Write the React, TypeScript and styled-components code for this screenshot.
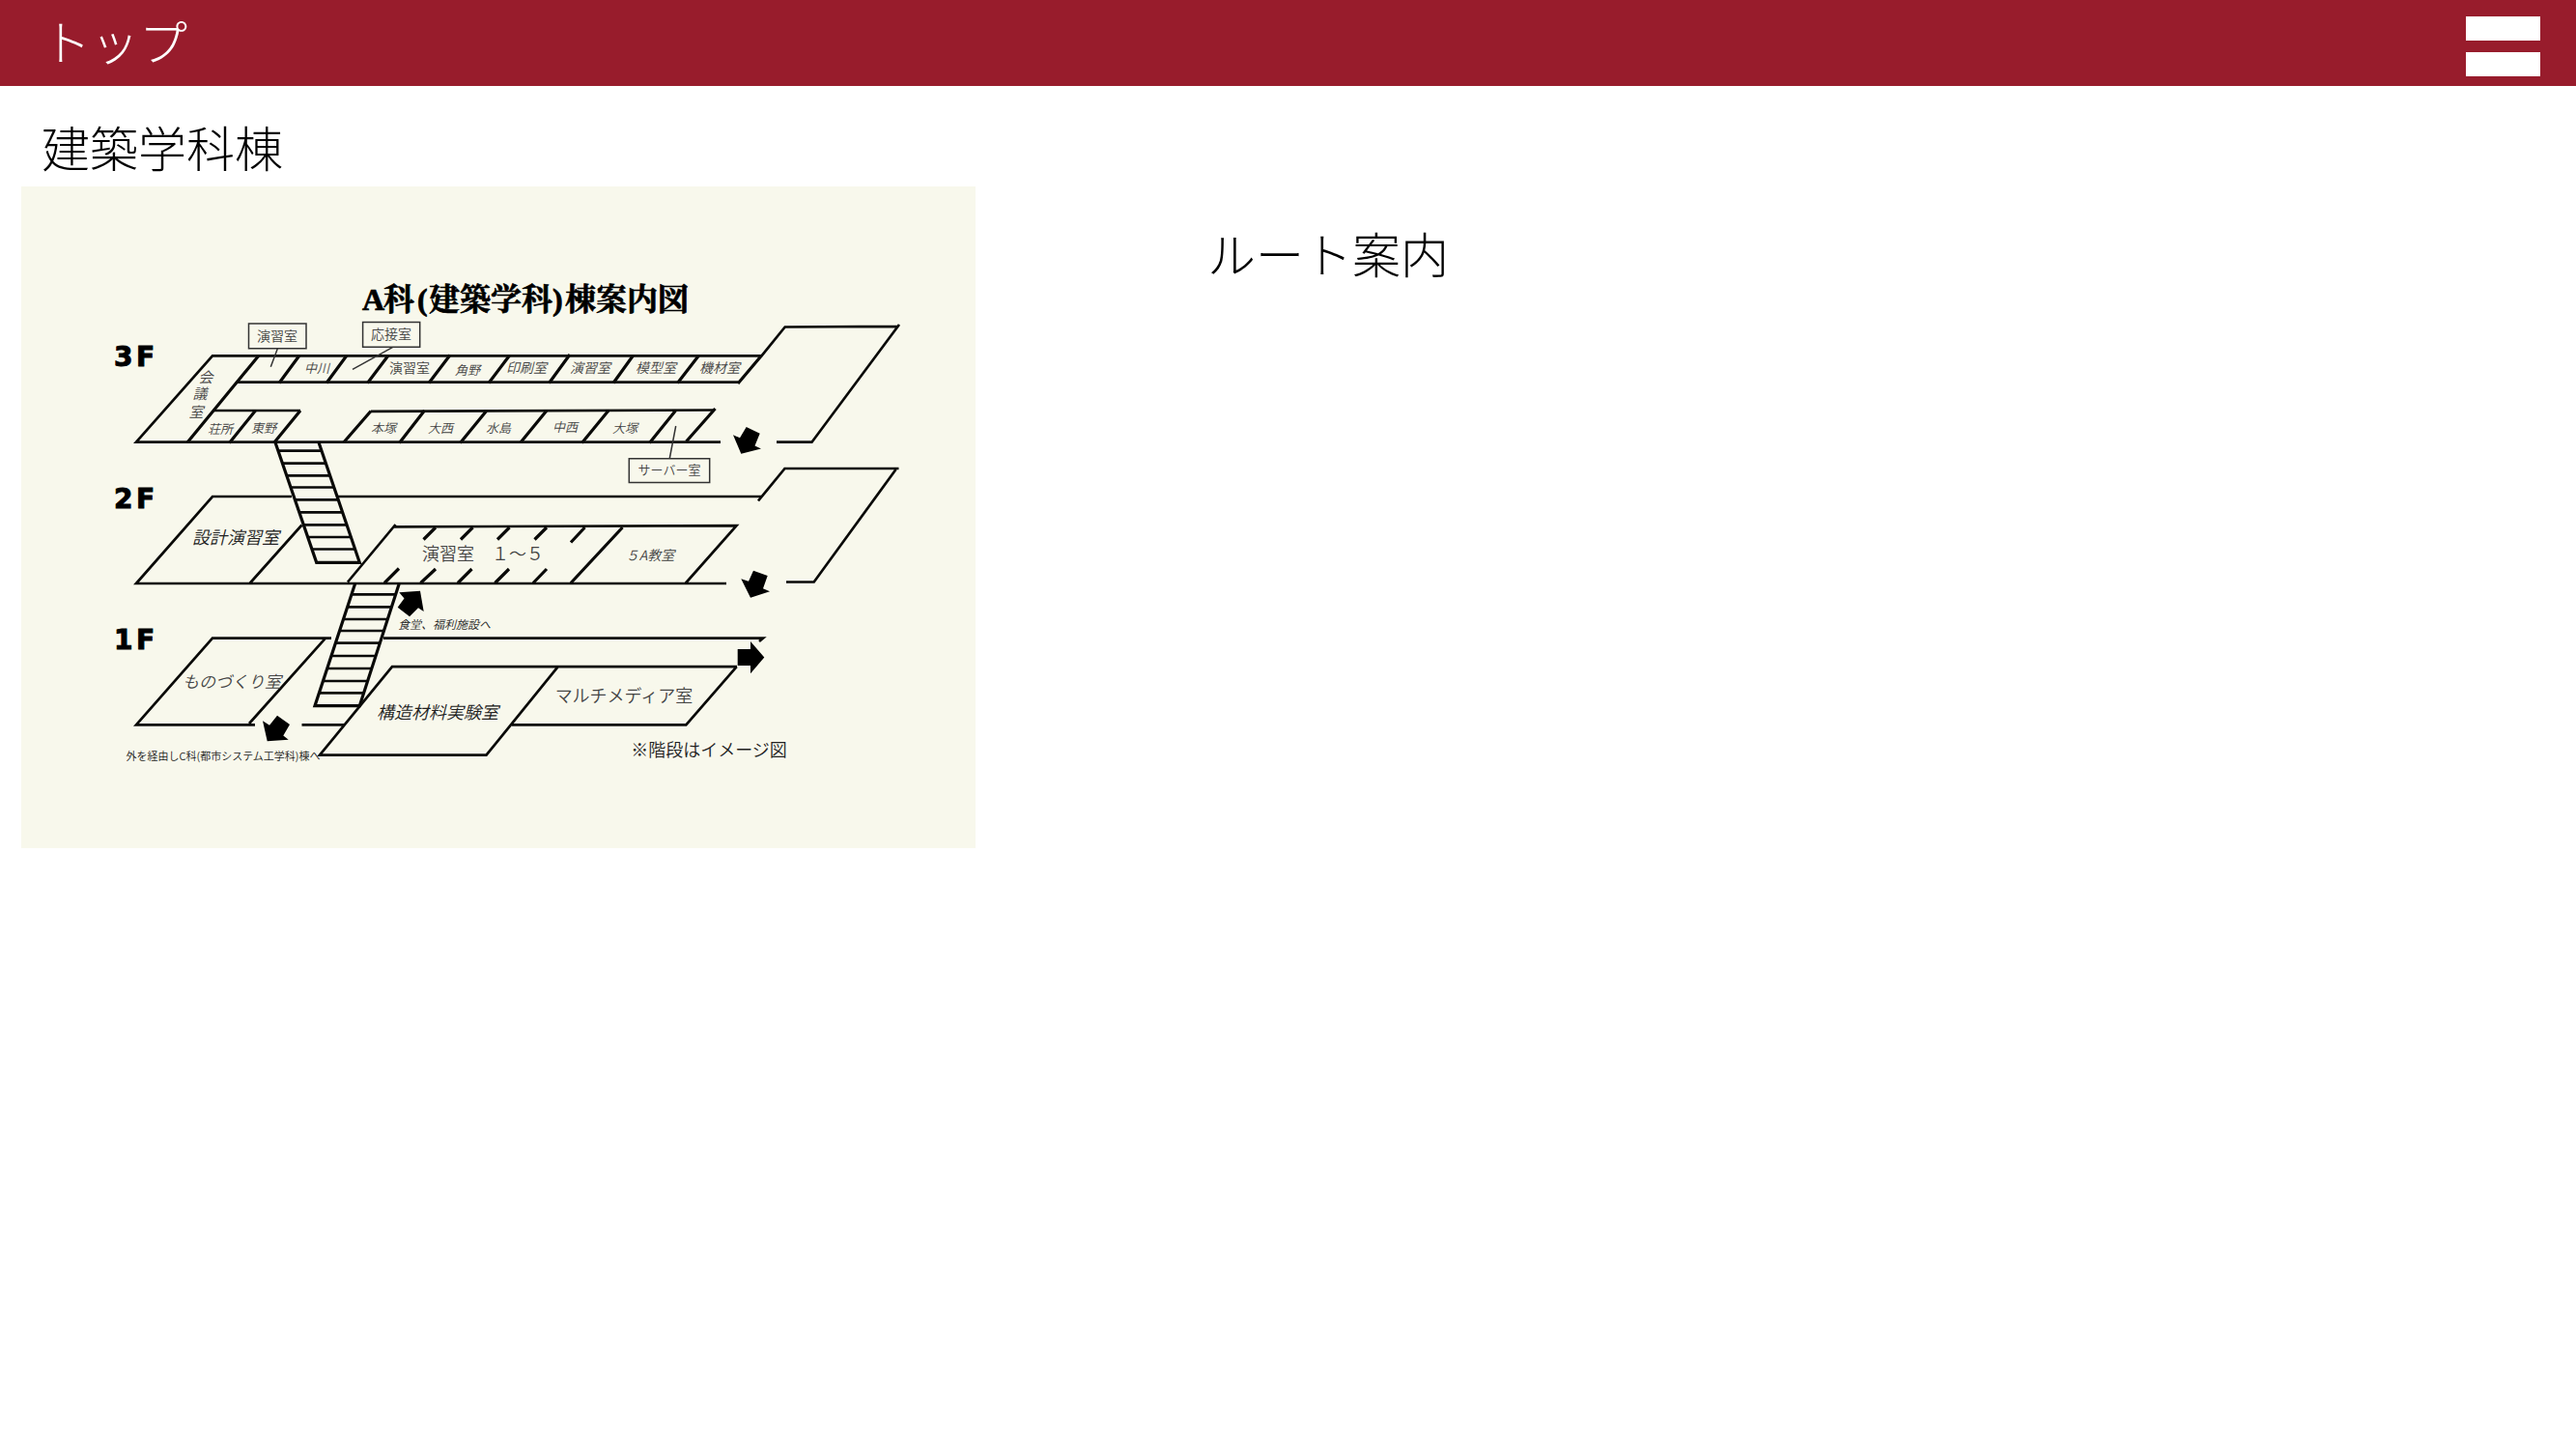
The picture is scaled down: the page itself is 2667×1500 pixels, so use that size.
import React from "react";
import styled, { createGlobalStyle } from "styled-components";

const GlobalStyle = createGlobalStyle`
  body {
    margin: 0;
    background: #fff;
    color: #000;
    font-family: "Noto Sans CJK JP", sans-serif;
    font-weight: 300;
  }
`;

const Header = styled.header`
  display: flex;
  align-items: flex-start;
  justify-content: space-between;
  height: 89px;
  padding: 0 37px 0 44px;
  background: #981c2c;
`;

const TopLink = styled.a`
  color: #fff;
  font-size: 50px;
  line-height: 82px;
  text-decoration: none;
`;

const MenuButton = styled.button`
  display: flex;
  flex-direction: column;
  gap: 12px;
  margin: 0;
  padding: 17px 0 0;
  border: 0;
  background: none;
  cursor: pointer;
`;

const MenuBar = styled.span`
  width: 77px;
  height: 25px;
  background: #fff;
`;

const Main = styled.main`
  display: grid;
  grid-template-columns: 988fr 1635fr;
  padding: 24px 22px;
`;

const PageTitle = styled.h1`
  grid-column: 1 / -1;
  margin: 0;
  padding: 0 21px 4px;
  font-size: 50px;
  font-weight: 300;
  line-height: 76px;
`;

const MapFrame = styled.figure`
  margin: 0;
`;

const MapSvg = styled.svg`
  display: block;
  width: 100%;
  height: auto;
  background: #f8f8ec;
`;

const RouteSection = styled.section`
  padding: 30px 0 0 240px;
`;

const RouteTitle = styled.h2`
  margin: 0;
  font-size: 50px;
  font-weight: 300;
  line-height: 76px;
`;

const Walls = styled.path`
  fill: none;
  stroke: #0a0a08;
  stroke-width: 2.7px;
`;

const Dividers = styled(Walls)`
  stroke-width: 3.2px;
`;

const Callouts = styled(Walls)`
  stroke: #333;
  stroke-width: 1.5px;
`;

const Arrow = styled.polygon`
  fill: #000;
`;

const Label = styled.text<{ $size?: number; $slant?: boolean; $color?: string }>`
  fill: ${(p) => p.$color ?? "#444"};
  font-size: ${(p) => p.$size ?? 14}px;
  font-style: ${(p) => (p.$slant ? "italic" : "normal")};
  font-weight: 350;
  text-anchor: middle;
  dominant-baseline: central;
`;

const MapTitle = styled.text`
  font-family: "Liberation Serif", "Noto Serif CJK JP", "Noto Sans CJK JP", serif;
  font-size: 32px;
  font-weight: 700;
  stroke: #000;
  stroke-width: 0.7px;
`;

const FloorName = styled.text`
  font-family: "DejaVu Sans", sans-serif;
  font-size: 28px;
  font-weight: 700;
  stroke: #000;
  stroke-width: 1px;
`;

type LabelData = { text: string; x: number; y: number; size?: number; slant?: boolean; color?: string };

const labels: LabelData[] = [
  { text: "演習室", x: 287, y: 347 },
  { text: "応接室", x: 405, y: 345 },
  { text: "会", x: 213, y: 389, size: 15, slant: true },
  { text: "議", x: 207, y: 406, size: 15, slant: true },
  { text: "室", x: 203, y: 425, size: 15, slant: true },
  { text: "中川", x: 328, y: 380, size: 13, slant: true },
  { text: "演習室", x: 424, y: 380 },
  { text: "角野", x: 484, y: 382, size: 13, slant: true },
  { text: "印刷室", x: 545, y: 380, slant: true },
  { text: "演習室", x: 611, y: 380, slant: true },
  { text: "模型室", x: 679, y: 380, slant: true },
  { text: "機材室", x: 745, y: 380, slant: true },
  { text: "荘所", x: 228, y: 443, size: 13, slant: true },
  { text: "東野", x: 273, y: 442, size: 13, slant: true },
  { text: "本塚", x: 397, y: 442, size: 13, slant: true },
  { text: "大西", x: 456, y: 442, size: 13, slant: true },
  { text: "水島", x: 516, y: 442, size: 13, slant: true },
  { text: "中西", x: 585, y: 441, size: 13, slant: true },
  { text: "大塚", x: 647, y: 442, size: 13, slant: true },
  { text: "サーバー室", x: 693, y: 485, size: 13 },
  { text: "設計演習室", x: 244, y: 555, size: 18, slant: true, color: "#222" },
  { text: "演習室　１～５", x: 500, y: 572, size: 18 },
  { text: "５A教室", x: 673, y: 574, slant: true },
  { text: "食堂、福利施設へ", x: 460, y: 645, size: 12, slant: true, color: "#222" },
  { text: "ものづくり室", x: 240, y: 704, size: 17, slant: true },
  { text: "構造材料実験室", x: 453, y: 736, size: 18, slant: true, color: "#222" },
  { text: "マルチメディア室", x: 646, y: 719, size: 18 },
  { text: "※階段はイメージ図", x: 734, y: 775, size: 18, color: "#222" },
  { text: "外を経由しC科(都市システム工学科)棟へ", x: 231, y: 782, size: 11, color: "#222" },
];

const thirdFloorWalls =
  "M789 368.3H220L141 457.7H746 M246 395.7H764 M222 425H311 M788.5 368.3L812.7 338.5L929 337.8 M931 336L840.5 457.7H804 M384 425.8L740 424.5";
const thirdFloorDividers =
  "M268 368L194 458 M310 368L289 396.5 M359 368L338 396.5 M402 368L380.5 396.5 M466 367.5L444 396.5 M527.5 368L506 396.5 M590 367L568.5 396.5 M655.5 368L635 396.5 M723.5 368L701.5 396.5 M788.5 368L764 397 M264.5 425L237.5 458.5 M311 425L284 458 M384 425.5L356 457.7 M439.5 425L413.5 458.5 M503.5 425.5L476.5 458.5 M566 425L539 458 M630 425L602.5 458.5 M699.5 425L672.5 458.5 M740.5 423L710.5 457";
const secondFloorWalls =
  "M302 514H220L141 604H752 M350 514H788 M785 518.5L812.5 485H930.5 M927.5 486L842.7 602.5H814 M312.5 543.5L258.5 604 M409.5 543L360 602.5 M408 545.3L762.5 544.2L710 603.5";
const secondFloorDividers =
  "M451 546L438.5 558.5 M489.5 546L477 558.5 M527.5 546L515 558.5 M566 546L553.5 558.5 M605.5 546L591 561.5 M644.5 546L591 603.5 M413 588.5L398 603.5 M451 589L435.5 603.5 M488.5 589L474 603.5 M527 589L512.5 603.5 M566 589L552 603.5";
const firstFloorWalls =
  "M343 660.7H220L141 750.3H264 M397 660.7H790L786 664 M337 660.7L258 749 M312.5 750.3H356 M763 690.2H406L331 781.7H503.5L577.7 690.2 M762.7 690.2L710.3 750.3H530";

const callouts =
  "M257.5 335H317V360.7H257.5Z M375.6 333.5H434.7V359.3H375.6Z M651.3 474.8H734.7V499.6H651.3Z M287.3 361L280.3 379.7 M406.7 359.3L365 382.3 M699.7 441L693.3 474.5";

const arrows = [
  "772.7,442 786.7,448.7 781.5,461.5 788,464.5 767.3,469.7 759,450.3 766,453.3",
  "780,590.7 794.7,596 790,609.3 797,612.3 777,618.7 767.3,599.3 775,601.7",
  "413.3,613.3 435,611.7 438.7,633 433,629.3 424,638.3 411.7,628.7 418.5,619.5",
  "287,740.7 300,750 293.3,761.5 298.7,765.7 276.7,767.3 272,746.3 279,750.7",
  "763.7,672 777,672 777,664 791.3,680.5 777,697.3 777,689 763.7,689",
];

type StairsProps = {
  top: [number, number];
  bottom: [number, number];
  y: [number, number];
  rungs: number[];
};

function Stairs({ top, bottom, y, rungs }: StairsProps) {
  const at = (value: number, side: 0 | 1) =>
    top[side] + ((bottom[side] - top[side]) * (value - y[0])) / (y[1] - y[0]);
  return (
    <>
      <Dividers d={`M${top[0]} ${y[0]}L${bottom[0]} ${y[1]}H${bottom[1]}L${top[1]} ${y[0]}`} />
      <Walls d={rungs.map((r) => `M${at(r, 0)} ${r}H${at(r, 1)}`).join(" ")} />
    </>
  );
}

function FloorMap() {
  return (
    <MapSvg viewBox="22 193 988 685" role="img" aria-label="A科(建築学科)棟案内図">
      <Walls d={thirdFloorWalls} />
      <Dividers d={thirdFloorDividers} />
      <Walls d={secondFloorWalls} />
      <Dividers d={secondFloorDividers} />
      <Walls d={firstFloorWalls} />
      <Stairs
        top={[285, 330]}
        bottom={[327.7, 372.3]}
        y={[458, 582.3]}
        rungs={[466.7, 479.7, 492.3, 504.5, 517.3, 530.3, 543.3, 556, 568.5]}
      />
      <Stairs
        top={[367.7, 413.3]}
        bottom={[326, 372.3]}
        y={[604, 730.7]}
        rungs={[615.3, 628.3, 641, 653, 665.7, 679, 692, 705, 717.3]}
      />
      <Callouts d={callouts} />
      {arrows.map((points) => (
        <Arrow key={points} points={points} />
      ))}
      <MapTitle y={321}>
        <tspan x={375}>A</tspan>
        <tspan x={397}>科</tspan>
        <tspan x={432}>(</tspan>
        <tspan x={444}>建築学科</tspan>
        <tspan x={572}>)</tspan>
        <tspan x={585}>棟案内図</tspan>
      </MapTitle>
      {[
        { digit: "3", y: 379 },
        { digit: "2", y: 526 },
        { digit: "1", y: 672 },
      ].map((floor) => (
        <FloorName key={floor.digit} y={floor.y}>
          <tspan x={118}>{floor.digit}</tspan>
          <tspan x={141}>F</tspan>
        </FloorName>
      ))}
      {labels.map((l) => (
        <Label key={`${l.text}-${l.x}`} x={l.x} y={l.y} $size={l.size} $slant={l.slant} $color={l.color}>
          {l.text}
        </Label>
      ))}
    </MapSvg>
  );
}

export default function App() {
  return (
    <>
      <GlobalStyle />
      <Header>
        <TopLink href="#">トップ</TopLink>
        <MenuButton type="button" aria-label="メニュー">
          <MenuBar />
          <MenuBar />
        </MenuButton>
      </Header>
      <Main>
        <PageTitle>建築学科棟</PageTitle>
        <MapFrame>
          <FloorMap />
        </MapFrame>
        <RouteSection>
          <RouteTitle>ルート案内</RouteTitle>
        </RouteSection>
      </Main>
    </>
  );
}
